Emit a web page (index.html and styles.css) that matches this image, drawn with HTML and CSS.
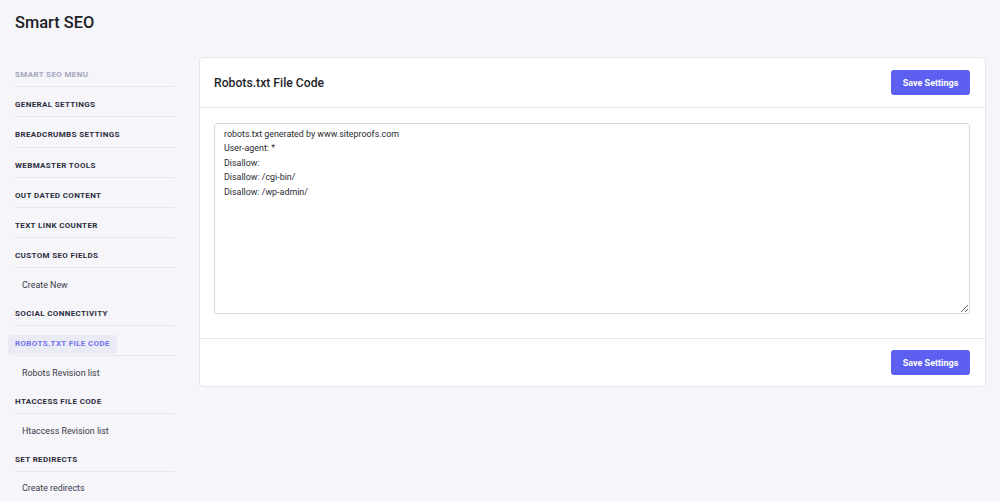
FILE: index.html
```html
<!DOCTYPE html>
<html>

<head>
    <title>Smart SEO - Robots.txt File Code</title>
    <link rel="stylesheet" href="styles.css">
</head>

<body>

    <div class="wrap">
        <h1 class="page-title">Smart SEO</h1>

        <div class="layout">
            <ul class="menu">
                <li class="menu-head">Smart SEO Menu</li>
                <li class="menu-item"><a href="#">General Settings</a></li>
                <li class="menu-item"><a href="#">Breadcrumbs Settings</a></li>
                <li class="menu-item"><a href="#">Webmaster Tools</a></li>
                <li class="menu-item"><a href="#">Out Dated Content</a></li>
                <li class="menu-item"><a href="#">Text Link Counter</a></li>
                <li class="menu-item"><a href="#">Custom SEO Fields</a></li>
                <li class="sub-item"><a href="#">Create New</a></li>
                <li class="menu-item"><a href="#">Social Connectivity</a></li>
                <li class="menu-item active"><a href="#">Robots.txt File Code</a></li>
                <li class="sub-item"><a href="#">Robots Revision list</a></li>
                <li class="menu-item"><a href="#">Htaccess File Code</a></li>
                <li class="sub-item"><a href="#">Htaccess Revision list</a></li>
                <li class="menu-item"><a href="#">Set Redirects</a></li>
                <li class="sub-item"><a href="#">Create redirects</a></li>
            </ul>

            <div class="card">
                <div class="card-header">
                    <h2 class="card-title">Robots.txt File Code</h2>
                    <button class="btn">Save Settings</button>
                </div>
                <div class="card-body">
                    <textarea class="code" spellcheck="false">robots.txt generated by www.siteproofs.com
User-agent: *
Disallow:
Disallow: /cgi-bin/
Disallow: /wp-admin/</textarea>
                </div>
                <div class="card-footer">
                    <button class="btn">Save Settings</button>
                </div>
            </div>
        </div>
    </div>

</body>

</html>
```

FILE: styles.css
```css
body {
    font-family: Roboto, 'Liberation Sans', Arial, sans-serif;
    background-color: #f5f5fa;
    color: #222;
    margin: 0;
}

.wrap {
    padding: 13px 14px 0 15px;
}

.page-title {
    margin: 0;
    font-size: 16.4px;
    line-height: 20px;
    font-weight: 500;
    color: #1d1d26;
}

.layout {
    display: flex;
    align-items: flex-start;
    gap: 24px;
    margin-top: 24px;
}

/* sidebar */
.menu {
    list-style: none;
    margin: 0;
    padding: 0;
    width: 160px;
    flex-shrink: 0;
}

.menu-head,
.menu-item {
    font-size: 8px;
    line-height: 10px;
    font-weight: 700;
    letter-spacing: 0.35px;
    text-transform: uppercase;
    padding: 13px 0 6.2px;
    border-bottom: 1px solid #e6e6ee;
}

.menu-head {
    color: #a3a5bd;
}

.menu-item a {
    color: #2c2e3e;
    text-decoration: none;
}

.menu-item.active a {
    display: inline-block;
    color: #7475ee;
    background-color: #ebebf5;
    border-radius: 3px;
    padding: 4.5px 7px 4.5px;
    margin: -4.5px 0 -4.5px -7px;
}

.sub-item {
    font-size: 8.9px;
    line-height: 10px;
    padding: 11.3px 0 6.4px 7px;
}

.sub-item a {
    color: #3a3b48;
    text-decoration: none;
}

/* main card */
.card {
    flex-grow: 1;
    background: #ffffff;
    border: 1px solid #e6e6ef;
    border-radius: 4px;
}

.card-header {
    display: flex;
    justify-content: space-between;
    align-items: center;
    padding: 12px 15px 12px 14px;
    border-bottom: 1px solid #e8e8f0;
}

.card-title {
    margin: 0;
    font-size: 12.2px;
    font-weight: 500;
    color: #1f1f29;
}

.btn {
    width: 79px;
    height: 25px;
    padding: 0;
    border: none;
    border-radius: 3px;
    background-color: #5c5ff0;
    color: #ffffff;
    font-family: Roboto, 'Liberation Sans', Arial, sans-serif;
    font-size: 9px;
    font-weight: 700;
    cursor: pointer;
}

.card-body {
    padding: 15px 15px 24px 14px;
    border-bottom: 1px solid #e8e8f0;
}

.code {
    display: block;
    box-sizing: border-box;
    width: 100%;
    height: 191px;
    margin: 0;
    padding: 3px 9px;
    border: 1px solid #d9d9e2;
    border-radius: 3px;
    font-family: Roboto, 'Liberation Sans', Arial, sans-serif;
    font-size: 8.9px;
    line-height: 14.4px;
    color: #2b2b33;
    resize: vertical;
    outline: none;
}

.card-footer {
    display: flex;
    justify-content: flex-end;
    padding: 11px 15px 11px 14px;
}
```
